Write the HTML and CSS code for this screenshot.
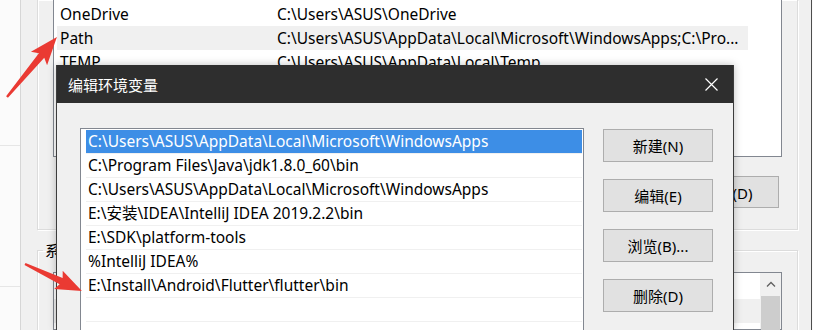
FILE: index.html
```html
<!DOCTYPE html>
<html lang="zh-CN">
<head>
    <meta charset="UTF-8">
    <title>编辑环境变量</title>
    <link rel="stylesheet" href="styles.css">
</head>
<body>
    <div class="screen">
        <div class="side">
            <div class="side-cell"></div>
            <div class="side-cell"></div>
        </div>

        <div class="env">
            <!-- 用户变量 -->
            <div class="group group-user">
                <div class="var-list">
                    <div class="var-row">
                        <span class="var-name">OneDrive</span>
                        <span class="var-value">C:\Users\ASUS\OneDrive</span>
                    </div>
                    <div class="var-row is-current">
                        <span class="var-name">Path</span>
                        <span class="var-value">C:\Users\ASUS\AppData\Local\Microsoft\WindowsApps;C:\Pro...</span>
                    </div>
                    <div class="var-row">
                        <span class="var-name">TEMP</span>
                        <span class="var-value">C:\Users\ASUS\AppData\Local\Temp</span>
                    </div>
                    <div class="var-row">
                        <span class="var-name">TMP</span>
                        <span class="var-value">C:\Users\ASUS\AppData\Local\Temp</span>
                    </div>
                </div>
                <div class="btn-row">
                    <button class="btn btn-env">新建(N)...</button>
                    <button class="btn btn-env">编辑(E)...</button>
                    <button class="btn btn-env">删除(D)</button>
                </div>
            </div>

            <!-- 系统变量 -->
            <fieldset class="group group-sys">
                <legend>系统变量(S)</legend>
                <div class="var-list sys-list">
                    <div class="sys-rows">
                        <div class="var-row"><span class="var-name">ComSpec</span></div>
                        <div class="var-row is-current"><span class="var-name">DriverData</span></div>
                    </div>
                    <div class="scrollbar">
                        <div class="scroll-arrow">
                            <svg width="10" height="6" viewBox="0 0 10 6"><path d="M1 5.5 L5 1.5 L9 5.5" fill="none" stroke="#606060" stroke-width="1.3"/></svg>
                        </div>
                        <div class="scroll-thumb"></div>
                    </div>
                </div>
            </fieldset>
        </div>
        <div class="edge"></div>
    </div>

    <!-- 编辑环境变量 对话框 -->
    <div class="dialog">
        <div class="dialog-title">
            <span>编辑环境变量</span>
            <svg class="close-icon" width="13" height="13" viewBox="0 0 13 13">
                <path d="M0.5 0.5 L12.5 12.5 M12.5 0.5 L0.5 12.5" stroke="#ffffff" stroke-width="1.2"/>
            </svg>
        </div>
        <div class="dialog-body">
            <div class="path-list">
                <div class="path-row is-selected">C:\Users\ASUS\AppData\Local\Microsoft\WindowsApps</div>
                <div class="path-row">C:\Program Files\Java\jdk1.8.0_60\bin</div>
                <div class="path-row">C:\Users\ASUS\AppData\Local\Microsoft\WindowsApps</div>
                <div class="path-row">E:\安装\IDEA\IntelliJ IDEA 2019.2.2\bin</div>
                <div class="path-row">E:\SDK\platform-tools</div>
                <div class="path-row">%IntelliJ IDEA%</div>
                <div class="path-row">E:\Install\Android\Flutter\flutter\bin</div>
                <div class="path-row"></div>
                <div class="path-row"></div>
            </div>
            <div class="dialog-actions">
                <button class="btn btn-dialog">新建(N)</button>
                <button class="btn btn-dialog">编辑(E)</button>
                <button class="btn btn-dialog">浏览(B)...</button>
                <button class="btn btn-dialog">删除(D)</button>
            </div>
        </div>
    </div>

    <!-- 红色标注箭头 -->
    <svg class="arrows" width="813" height="330" viewBox="0 0 813 330">
        <polygon points="0,-1.2 54,-3.5 50,-10.5 78,0 50,10.5 54,3.5 0,1.2" fill="#ea3a33" transform="translate(7,97) rotate(-50.2)"/>
        <polygon points="0,-1.2 40,-3.5 37,-10 63,0 37,10 40,3.5 0,1.2" fill="#ea3a33" transform="translate(25,264) rotate(25.4)"/>
    </svg>
</body>
</html>
```

FILE: styles.css
```css
body {
    margin: 0;
    font-family: "Noto Sans", "Noto Sans CJK SC", sans-serif;
    font-size: 15px;
    color: #000;
    overflow: hidden;
}

.screen {
    display: flex;
    height: 330px;
    overflow: hidden;
}

.side {
    width: 20px;
    background: #fbfbfb;
    border-right: 1px solid #d6d6d6;
}

.side-cell {
    height: 145px;
    border-bottom: 1px solid #e6e6e6;
}

.side-cell + .side-cell {
    height: 140px;
}

.env {
    flex: 1;
    background: #f0f0f0;
    padding: 0 13px 0 16px;
    border-right: 1px solid #4d4d4d;
}

.edge {
    width: 1px;
    background: #fafafa;
}

.group {
    border: 1px solid #dcdcdc;
    box-shadow: inset 1px 1px 0 #ffffff, 1px 1px 0 #ffffff;
}

.group-user {
    box-sizing: border-box;
    height: 230px;
    border-top: none;
    padding: 0 15px;
}

.var-list {
    background: #fff;
    border: 1px solid #828790;
}

.group-user .var-list {
    box-sizing: border-box;
    height: 157px;
    border-top: none;
    padding-top: 2px;
}

.var-row {
    display: flex;
    width: 691px;
    height: 24px;
    line-height: 24px;
    margin-left: 3px;
    font-size: 15.5px;
    white-space: nowrap;
}

.var-row.is-current {
    background: #f0f0f0;
}

.var-name {
    width: 217px;
    padding-left: 3px;
}

.btn-row {
    display: flex;
    justify-content: flex-end;
    gap: 10px;
    margin-top: 19px;
    padding-right: 3px;
}

.btn {
    font-family: inherit;
    font-size: 15px;
    color: #000;
    background: #e1e1e1;
    border: 1px solid #adadad;
    padding: 0;
}

.btn-env {
    width: 103px;
    height: 32px;
}

.group-sys {
    margin: 10px 0 0;
    padding: 0 15px;
    min-width: 0;
}

.group-sys legend {
    margin-left: -10px;
    padding: 0 2px;
    line-height: 20px;
}

.sys-list {
    display: flex;
    height: 56px;
    margin-top: 12px;
}

.sys-rows {
    flex: 1;
}

.sys-rows .var-row {
    width: auto;
    margin: 0;
}

.sys-rows .var-row + .var-row {
    margin-top: 2px;
}

.scrollbar {
    width: 21px;
    background: #f0f0f0;
}

.scroll-arrow {
    height: 21px;
    display: flex;
    align-items: center;
    justify-content: center;
}

.scroll-thumb {
    height: 35px;
    margin: 2px 1px 0;
    background: #cdcdcd;
}

/* 对话框，盖在窗口上面 */
.dialog {
    position: absolute;
    left: 56px;
    top: 65px;
    width: 678px;
    height: 265px;
    box-sizing: border-box;
    overflow: hidden;
    background: #f0f0f0;
    border: 1px solid #3c3c3c;
    border-top: none;
    border-bottom: none;
    box-shadow: 0 0 8px rgba(0, 0, 0, 0.25);
}

.dialog-title {
    display: flex;
    align-items: center;
    justify-content: space-between;
    height: 38px;
    padding: 0 15px 0 11px;
    background: #2e2e2e;
    color: #fff;
}

.close-icon {
    margin-top: 1px;
}

.dialog-body {
    display: flex;
    align-items: flex-start;
    padding: 25px 0 0 23px;
}

.path-list {
    width: 504px;
    height: 210px;
    box-sizing: border-box;
    background: #fff;
    border: 1px solid #828790;
    border-bottom: none;
    padding: 1px 1px 0 5px;
}

.path-row {
    box-sizing: border-box;
    height: 24px;
    line-height: 23px;
    padding-left: 2px;
    border-bottom: 1px solid #f0f0f0;
    font-size: 15.5px;
    white-space: nowrap;
}

.path-row.is-selected {
    background: #3d8ee6;
    color: #fff;
}

.dialog-actions {
    display: flex;
    flex-direction: column;
    gap: 17px;
    margin: 1px 0 0 19px;
}

.btn-dialog {
    width: 110px;
    height: 33px;
}

.arrows {
    position: absolute;
    left: 0;
    top: 0;
    pointer-events: none;
}
```
